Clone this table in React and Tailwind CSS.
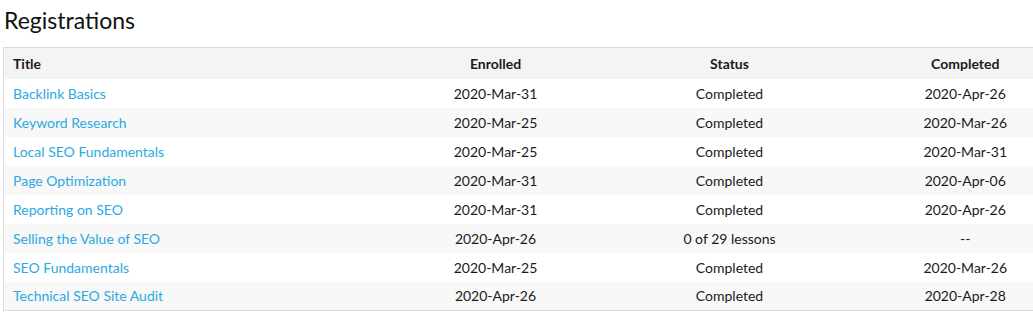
const rows = [
  { title: 'Backlink Basics', enrolled: '2020-Mar-31', status: 'Completed', completed: '2020-Apr-26' },
  { title: 'Keyword Research', enrolled: '2020-Mar-25', status: 'Completed', completed: '2020-Mar-26' },
  { title: 'Local SEO Fundamentals', enrolled: '2020-Mar-25', status: 'Completed', completed: '2020-Mar-31' },
  { title: 'Page Optimization', enrolled: '2020-Mar-31', status: 'Completed', completed: '2020-Apr-06' },
  { title: 'Reporting on SEO', enrolled: '2020-Mar-31', status: 'Completed', completed: '2020-Apr-26' },
  { title: 'Selling the Value of SEO', enrolled: '2020-Apr-26', status: '0 of 29 lessons', completed: '--' },
  { title: 'SEO Fundamentals', enrolled: '2020-Mar-25', status: 'Completed', completed: '2020-Mar-26' },
  { title: 'Technical SEO Site Audit', enrolled: '2020-Apr-26', status: 'Completed', completed: '2020-Apr-28' },
];

export default function App() {
  return (
    <div className="bg-white px-[3px] pt-[5px] text-[#1a1a1a] font-['Lato','Noto_Sans',sans-serif]">
      <h2 className="text-[23px] leading-[30px] mb-[12px] pl-[1px] text-[#111]">Registrations</h2>
      <table className="w-[1030px] table-fixed border-collapse border border-[#dcdcdc] text-[14px]">
        <colgroup>
          <col className="w-[426px]" />
          <col className="w-[132px]" />
          <col className="w-[336px]" />
          <col className="w-[136px]" />
        </colgroup>
        <thead>
          <tr className="bg-[#f4f4f4] h-[31px]">
            <th className="text-left font-bold px-[9px]">Title</th>
            <th className="text-center font-bold">Enrolled</th>
            <th className="text-center font-bold">Status</th>
            <th className="text-center font-bold">Completed</th>
          </tr>
        </thead>
        <tbody>
          {rows.map((r, i) => (
            <tr key={r.title} className={`h-[29px] ${i % 2 ? 'bg-[#f8f8f8]' : 'bg-white'}`}>
              <td className="px-[9px] text-[#2ba9e1]">{r.title}</td>
              <td className="text-center">{r.enrolled}</td>
              <td className="text-center">{r.status}</td>
              <td className="text-center">{r.completed}</td>
            </tr>
          ))}
        </tbody>
      </table>
    </div>
  );
}
